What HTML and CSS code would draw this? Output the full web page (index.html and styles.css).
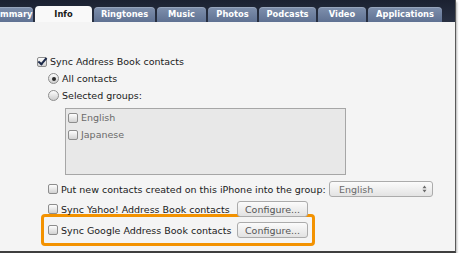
FILE: index.html
```html
<!DOCTYPE html>
<html>
<head>
	<title>Info</title>
	<link rel="stylesheet" href="styles.css">
</head>
<body>
	<div class="window">
		<div class="tabbar">
			<span class="tab first">mmary</span>
			<span class="tab active">Info</span>
			<span class="tab w-ring">Ringtones</span>
			<span class="tab w-music">Music</span>
			<span class="tab w-photos">Photos</span>
			<span class="tab w-pod">Podcasts</span>
			<span class="tab w-video">Video</span>
			<span class="tab w-apps">Applications</span>
		</div>

		<div class="content">
			<label class="row"><span class="check on"></span>Sync Address Book contacts</label>
			<label class="row sub"><span class="radio on"></span>All contacts</label>
			<label class="row sub"><span class="radio"></span>Selected groups:</label>

			<div class="groups">
				<label class="row dim"><span class="check"></span>English</label>
				<label class="row dim"><span class="check"></span>Japanese</label>
			</div>

			<div class="row sub put">
				<span class="check"></span><span class="label-put">Put new contacts created on this iPhone into the group:</span>
				<span class="popup">English
					<svg class="arrows" width="5" height="8" viewBox="0 0 5 8"><path d="M0.5 3.2 L2.5 0.5 L4.5 3.2 Z M0.5 4.8 L2.5 7.5 L4.5 4.8 Z" fill="#6a6a6a"/></svg>
				</span>
			</div>
			<div class="row sub yahoo">
				<span class="check"></span><span class="label-w">Sync Yahoo! Address Book contacts</span>
				<span class="button">Configure...</span>
			</div>
			<div class="highlight">
				<div class="row">
					<span class="check"></span><span class="label-w">Sync Google Address Book contacts</span>
					<span class="button">Configure...</span>
				</div>
			</div>
		</div>
	</div>
</body>
</html>
```

FILE: styles.css
```css
body {
	margin: 0;
	padding: 0;
	background-color: #ffffff;
	font-family: "DejaVu Sans", sans-serif;
	font-size: 9.5px;
	color: #1a1a1a;
}

.window {
	width: 455px;
	height: 251px;
	background-color: #f4f4f4;
	border-right: 1px solid #5a5a5a;
	border-bottom: 2px solid #3f3f3f;
	box-shadow: 1px 2px 2px rgba(0, 0, 0, 0.3);
}

.tabbar {
	height: 22px;
	background: linear-gradient(#1b2131, #283042);
	display: flex;
	align-items: flex-end;
	gap: 2px;
}

.tab {
	height: 15px;
	line-height: 15px;
	text-align: center;
	font-weight: bold;
	font-size: 8.3px;
	color: #ffffff;
	background: linear-gradient(#7f90ad, #5f7192);
	border-radius: 4px 4px 0 0;
	box-shadow: inset 0 1px 0 rgba(255, 255, 255, 0.2);
	flex: none;
}

.tab.first {
	width: 33px;
	text-align: right;
	padding-right: 2px;
	box-sizing: border-box;
	border-radius: 0 4px 0 0;
}

.tab.active {
	width: 57px;
	height: 16px;
	line-height: 16px;
	background: #f9f9f9;
	color: #1a1a1a;
	box-shadow: none;
}

.w-ring { width: 61px; }
.w-music { width: 49px; }
.w-photos { width: 49px; }
.w-pod { width: 57px; }
.w-video { width: 48px; }
.w-apps { width: 74px; }

.content {
	padding: 31px 0 0 37px;
}

.row {
	display: flex;
	align-items: center;
	height: 17px;
	white-space: nowrap;
}

.sub {
	padding-left: 11px;
}

.check {
	width: 8px;
	height: 8px;
	border: 1px solid #8d8d8d;
	border-radius: 2px;
	background: linear-gradient(#fdfdfd, #d2d2d2);
	margin-right: 3px;
	position: relative;
	flex: none;
}

.check.on::after {
	content: "";
	position: absolute;
	left: 2px;
	top: -2px;
	width: 3px;
	height: 7px;
	border-right: 2px solid #1d2a4a;
	border-bottom: 2px solid #1d2a4a;
	transform: rotate(40deg);
}

.radio {
	width: 9px;
	height: 9px;
	border: 1px solid #8d8d8d;
	border-radius: 50%;
	background: linear-gradient(#fdfdfd, #cdcdcd);
	margin-right: 3px;
	position: relative;
	flex: none;
}

.radio.on::after {
	content: "";
	position: absolute;
	left: 2.5px;
	top: 2.5px;
	width: 4px;
	height: 4px;
	border-radius: 50%;
	background: #2a2a2a;
}

.groups {
	width: 281px;
	height: 67px;
	margin: 4px 0 0 28px;
	border: 1px solid #a6a6a6;
	background: #e8e8e8;
	padding: 0 0 0 2px;
	box-sizing: border-box;
}

.dim {
	color: #6a6a6a;
}

.put {
	margin-top: 6px;
	height: 16px;
}

.label-put {
	width: 268px;
}

.popup {
	width: 104px;
	height: 16px;
	border: 1px solid #ababab;
	border-radius: 3px;
	background: linear-gradient(#fbfbfb, #e3e3e3);
	color: #6a6a6a;
	padding: 0 5px 0 9px;
	box-sizing: border-box;
	display: flex;
	align-items: center;
	justify-content: space-between;
}

.yahoo {
	margin-top: 4px;
	height: 16px;
}

.label-w {
	width: 176px;
}

.button {
	width: 71px;
	height: 16px;
	border: 1px solid #ababab;
	border-radius: 3px;
	background: linear-gradient(#fbfbfb, #e2e2e2);
	color: #555555;
	display: flex;
	align-items: center;
	justify-content: center;
	box-sizing: border-box;
}

.highlight {
	margin: -3px 0 0 4px;
	width: 274px;
	height: 32px;
	border: 3px solid #f39200;
	border-radius: 4px;
	box-sizing: border-box;
	padding: 4px 0 0 4px;
}

.highlight .row {
	height: 18px;
}
```
